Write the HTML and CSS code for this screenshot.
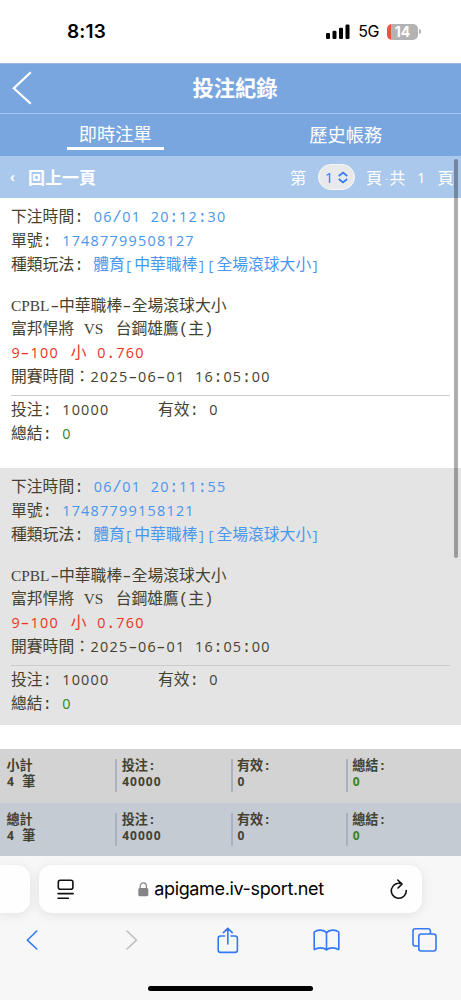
FILE: index.html
```
<!DOCTYPE html>
<html lang="zh-Hant">
<head>
<meta charset="utf-8">
<meta name="viewport" content="width=device-width, initial-scale=1">
<title>投注紀錄</title>
<link rel="stylesheet" href="styles.css">
</head>
<body>
<div class="phone">
  <div class="status">
    <span class="clock">8:13</span>
    <div class="status-right">
      <svg class="signal" width="24" height="16" viewBox="0 0 24 16"><rect x="0" y="9" width="4" height="6" rx="1.3"/><rect x="6.5" y="6.7" width="4" height="8.3" rx="1.3"/><rect x="13" y="3.8" width="4" height="11.2" rx="1.3"/><rect x="19.5" y="0.5" width="4" height="14.5" rx="1.3"/></svg>
      <span class="net">5G</span>
      <div class="battery"><span>14</span></div>
      <i class="battery-tip"></i>
    </div>
  </div>

  <header class="titlebar">
    <svg class="back" width="20" height="34" viewBox="0 0 20 34"><path d="M18.8 1.2 1.8 17.2 18.8 32.8"/></svg>
    <h1>投注紀錄</h1>
  </header>
  <nav class="tabs">
    <a class="tab active">即時注單</a>
    <a class="tab">歷史帳務</a>
  </nav>
  <div class="pager">
    <span class="arrow">‹</span>
    <b class="return">回上一頁</b>
    <span class="nth">第</span>
    <span class="select"><span>1</span><svg width="10" height="13" viewBox="0 0 10 13"><path d="M.8 5 5 1.5 9.2 5M.8 8 5 11.5 9.2 8"/></svg></span>
    <span class="page">頁</span><span class="dot">.</span><span>共</span><span class="total">1</span><span>頁</span>
  </div>

  <main class="records">
    <section class="record">
      <div class="info">
        <p>下注時間: <span class="blue"><span class="n">06</span>/<span class="n">01</span> <span class="n">20</span>:<span class="n">12</span>:<span class="n">30</span></span></p>
        <p>單號: <span class="blue"><span class="n">17487799508127</span></span></p>
        <p>種類玩法: <span class="blue">體育<span class="br">[</span>中華職棒<span class="br">][</span>全場滾球大小<span class="br">]</span></span></p>
      </div>
      <div class="match">
        <p><span class="latin">CPBL</span><span class="dash">-</span>中華職棒<span class="dash">-</span>全場滾球大小</p>
        <p>富邦悍將 <span class="latin">VS</span><span class="wide"> </span>台鋼雄鷹(主)</p>
        <p class="red"><span class="n">9</span><span class="dash">-</span><span class="n">100</span><span class="wide"> </span>小<span class="wide1"> </span><span class="n">0</span>.<span class="n">760</span></p>
        <p>開賽時間：<span class="n">2025</span><span class="dash">-</span><span class="n">06</span><span class="dash">-</span><span class="n">01</span> <span class="n">16</span>:<span class="n">05</span>:<span class="n">00</span></p>
      </div>
      <div class="money">
        <p>投注: <span class="n">10000</span></p>
        <p>有效: <span class="n">0</span></p>
        <p>總結: <span class="n green">0</span></p>
      </div>
    </section>
    <section class="record alt">
      <div class="info">
        <p>下注時間: <span class="blue"><span class="n">06</span>/<span class="n">01</span> <span class="n">20</span>:<span class="n">11</span>:<span class="n">55</span></span></p>
        <p>單號: <span class="blue"><span class="n">17487799158121</span></span></p>
        <p>種類玩法: <span class="blue">體育<span class="br">[</span>中華職棒<span class="br">][</span>全場滾球大小<span class="br">]</span></span></p>
      </div>
      <div class="match">
        <p><span class="latin">CPBL</span><span class="dash">-</span>中華職棒<span class="dash">-</span>全場滾球大小</p>
        <p>富邦悍將 <span class="latin">VS</span><span class="wide"> </span>台鋼雄鷹(主)</p>
        <p class="red"><span class="n">9</span><span class="dash">-</span><span class="n">100</span><span class="wide"> </span>小<span class="wide1"> </span><span class="n">0</span>.<span class="n">760</span></p>
        <p>開賽時間：<span class="n">2025</span><span class="dash">-</span><span class="n">06</span><span class="dash">-</span><span class="n">01</span> <span class="n">16</span>:<span class="n">05</span>:<span class="n">00</span></p>
      </div>
      <div class="money">
        <p>投注: <span class="n">10000</span></p>
        <p>有效: <span class="n">0</span></p>
        <p>總結: <span class="n green">0</span></p>
      </div>
    </section>
    <i class="scrollbar"></i>
  </main>

  <div class="sums">
    <div class="sum">
      <div class="cell"><p>小計</p><p><span class="n">4</span> 筆</p></div>
      <div class="cell"><p>投注:</p><p><span class="n">40000</span></p></div>
      <div class="cell"><p>有效:</p><p><span class="n">0</span></p></div>
      <div class="cell"><p>總結:</p><p><span class="n green">0</span></p></div>
    </div>
    <div class="sum grand">
      <div class="cell"><p>總計</p><p><span class="n">4</span> 筆</p></div>
      <div class="cell"><p>投注:</p><p><span class="n">40000</span></p></div>
      <div class="cell"><p>有效:</p><p><span class="n">0</span></p></div>
      <div class="cell"><p>總結:</p><p><span class="n green">0</span></p></div>
    </div>
  </div>

  <footer class="browser">
    <div class="address-row">
      <div class="prev-tab"></div>
      <div class="address">
        <svg class="reader" width="18" height="21" viewBox="0 0 18 21"><rect x="1.3" y="1.2" width="14.6" height="9" rx="2"/><path d="M1 14.6H16.2M1 19.2H11.3"/></svg>
        <div class="host">
          <svg width="11" height="15" viewBox="0 0 11 15"><rect x=".3" y="6" width="10" height="8.3" rx="1.5" fill="#858589"/><path d="M2.2 6.5V4a3.1 3.1 0 0 1 6.2 0v2.5" fill="none" stroke="#858589" stroke-width="1.2"/></svg>
          <span>apigame.iv-sport.net</span>
        </div>
        <svg class="reload" width="18" height="21" viewBox="0 0 18 21"><path d="M16.3 11.5A7.5 7.5 0 1 1 11.8 4.9M7.8 1 12 5.1 8 9"/></svg>
      </div>
    </div>
    <div class="tools">
      <svg width="12" height="20" viewBox="0 0 12 20"><path d="M10.8 1 1.3 10.2 10.8 19"/></svg>
      <svg class="off" width="12" height="20" viewBox="0 0 12 20"><path d="M1 1 10.5 10.2 1 19"/></svg>
      <svg width="22" height="27" viewBox="0 0 22 27"><path d="M7.6 9H3.5Q1.2 9 1.2 11.4V23.3Q1.2 25.4 3.5 25.4H18Q20.4 25.4 20.4 23.3V11.4Q20.4 9 18 9H14M10.8 17V1.2M6.4 5.6 10.8 1.2 15.2 5.6"/></svg>
      <svg width="27" height="22" viewBox="0 0 27 22"><path d="M13.5 3.6C10.7.5 4.5.3 1.2 3V20.6C4.8 18.3 10.5 18.2 13.5 20.8 16.5 18.2 22.2 18.3 25.8 20.6V3C22.5.3 16.3.5 13.5 3.6ZM13.5 3.6V20.8"/></svg>
      <svg width="25" height="24" viewBox="0 0 25 24"><path d="M6.3 18H3.2Q1 18 1 15.7V3Q1 .8 3.2 .8H16Q18.4 .8 18.4 3V5.8"/><rect x="6.8" y="6" width="17.2" height="17" rx="2.4"/></svg>
    </div>
    <div class="home"></div>
  </footer>
</div>
</body>
</html>
```
FILE: styles.css
```
* { box-sizing: border-box; }
body { margin: 0; background: #fff; }
p, h1 { margin: 0; }
svg { display: block; flex: none; }
.phone {
  width: 461px; height: 1000px; overflow: hidden;
  display: flex; flex-direction: column;
  font-family: "Liberation Mono", "Noto Sans CJK TC", monospace;
  color: #45412f;
}
.phone > * { flex: none; }

.status { height: 63px; display: flex; justify-content: space-between; padding: 0 40px 0 67px; font-family: Inter, sans-serif; color: #000; }
.clock { font-size: 19px; font-weight: 600; line-height: 63px; letter-spacing: .2px; }
.status-right { display: flex; align-items: center; }
.signal { margin-right: 8px; }
.net { font-size: 16px; letter-spacing: -.4px; margin-right: 8px; line-height: 63px; }
.battery { width: 31px; height: 16px; border-radius: 5px; background: linear-gradient(90deg, #ed5242 4.5px, #b3b3b3 4.5px); display: flex; align-items: center; justify-content: center; color: #fff; font-size: 14px; font-weight: 700; line-height: 16px; }
.battery-tip { width: 2px; height: 5px; margin-left: 1px; border-radius: 0 2px 2px 0; background: #b3b3b3; }

.titlebar { height: 51px; display: grid; grid-template-columns: 32px 1fr 23px; align-items: center; background: #7aa6e0; border-top: 1px solid #94b9e9; border-bottom: 1px solid #a2c6f6; color: #fff; }
.back { margin-left: 12px; margin-top: -2px; fill: none; stroke: #fff; stroke-width: 2.2; }
.titlebar h1 { font-size: 21.3px; line-height: 46px; padding-bottom: 3px; text-align: center; font-family: "Noto Sans CJK TC", sans-serif; font-weight: 700; }
.tabs { height: 42px; display: grid; grid-template-columns: 1fr 1fr; justify-items: center; background: #7aa6e0; color: #fff; }
.tab { height: 36px; width: 97px; text-align: center; font: 18.2px/41px "Noto Sans CJK TC", sans-serif; }
.tab.active { border-bottom: 3px solid #fff; line-height: 38px; }
.pager { height: 42px; display: flex; align-items: center; padding-left: 10px; background: #aac7ec; color: #fff; font: 16.2px/40px "Noto Sans CJK TC", sans-serif; white-space: nowrap; }
.arrow { width: 18px; font: 700 15px/40px "Liberation Sans", sans-serif; }
.return { width: 262px; font-size: 17px; }
.nth { width: 28px; }
.select { width: 37px; height: 26px; display: flex; align-items: center; justify-content: center; gap: 5px; border: 1px solid #f8f8f8; border-radius: 13px; background: #e8e9ea; color: #3478f6; font: 15px/24px "Open Sans", sans-serif; }
.select svg { fill: none; stroke: #3478f6; stroke-width: 1.7; }
.page { margin-left: 11px; }
.dot { width: 7px; font-size: 9px; padding-left: 3px; }
.total { width: 32px; text-align: center; font: 15px/42px "Open Sans", sans-serif; }

.records { position: relative; height: 550.5px; font-size: 15.8px; }
.scrollbar { position: absolute; right: 3px; top: -39px; width: 4px; height: 399px; border-radius: 2px; background: rgba(0,0,0,.32); }
.record { height: 270px; padding: 8px 11px 0; }
.record.alt { height: 257px; background: #e4e4e4; }
.record p { height: 24.2px; line-height: 24.2px; white-space: pre; }
.record .match { padding: 17px 0 4.6px; border-bottom: 1px solid #ccc; }
.record .match p { height: 23.7px; line-height: 23.7px; }
.money { display: grid; grid-template-columns: 147px 1fr; padding-top: 3px; }
.n { font-family: "Open Sans", sans-serif; font-size: 14.4px; line-height: 1; letter-spacing: 1.25px; margin: 0 -.6px 0 .6px; }
.latin { font: 15.4px/1 "Liberation Serif", serif; }
.wide { letter-spacing: 2.8px; }
.wide1 { letter-spacing: .6px; }
.dash { display: inline-block; width: 5.5px; margin: 0 2px; text-align: center; font: 15.8px/1 "Liberation Sans", sans-serif; transform: scaleX(1.65); }
.br { font-size: 13px; line-height: 1; letter-spacing: 1.68px; }
.blue { color: #4896ee; }
.red { color: #eb3323; }
.green { color: #34851f; }

.sums { font-size: 13.1px; font-weight: 700; }
.sum { height: 54px; padding-top: 10px; display: grid; grid-template-columns: repeat(4, 1fr); background: #d3d3d3; }
.sum.grand { height: 53.5px; background: #c4cbd3; }
.cell { height: 33px; padding-left: 4.5px; border-left: 2px solid #a9b1c0; }
.cell:first-child { border-color: transparent; }
.cell p { height: 16.5px; line-height: 16.5px; }
.cell .n { font-size: 12px; letter-spacing: 1px; margin: 0 -.5px 0 .5px; }

.browser { height: 144px; background: #f7f7f7; padding-top: 9px; }
.address-row { display: grid; grid-template-columns: 30px 383px; gap: 9px; }
.prev-tab, .address { height: 48px; background: #fefefe; box-shadow: 0 2px 12px rgba(0,0,0,.09); }
.prev-tab { border-radius: 0 13px 13px 0; }
.address { border-radius: 13px; display: flex; align-items: center; justify-content: space-between; padding: 0 14px 0 18px; }
.host { display: flex; align-items: center; gap: 5px; margin-right: 3px; color: #000; font: 18px/48px Inter, sans-serif; letter-spacing: -.35px; white-space: nowrap; }
.reader, .reload { fill: none; stroke: #111; stroke-width: 1.6; stroke-linecap: round; stroke-linejoin: round; }
.tools { width: 491px; height: 54px; margin-left: -17px; display: grid; grid-template-columns: repeat(5, 1fr); justify-items: center; align-items: center; }
.tools svg { fill: none; stroke: #3478f6; stroke-width: 1.6; stroke-linecap: round; stroke-linejoin: round; }
.tools .off { stroke: #bfbfc1; margin-left: 4px; }
.home { width: 165px; height: 5px; margin: 19px auto 0; border-radius: 3px; background: #000; }
```
